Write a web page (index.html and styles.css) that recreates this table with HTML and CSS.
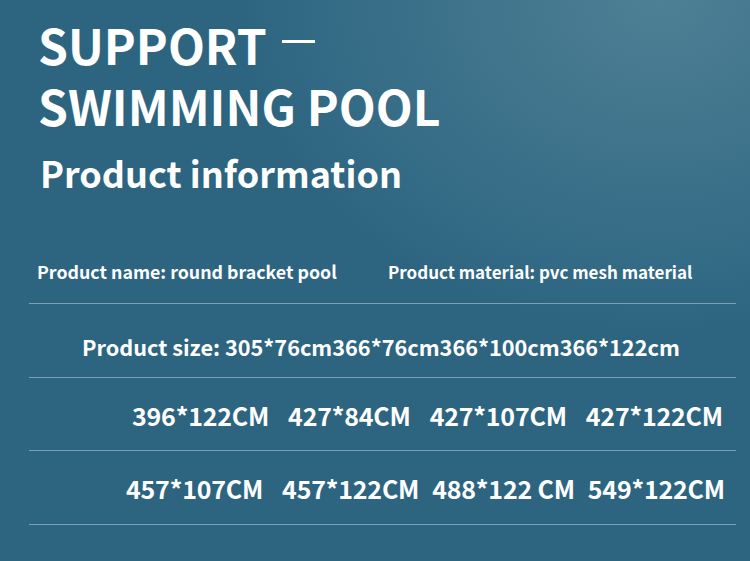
FILE: index.html
```html
<!DOCTYPE html>
<html lang="en">
<head>
  <meta charset="UTF-8" />
  <title>Support Swimming Pool</title>
  <link rel="stylesheet" href="styles.css">
</head>
<body>

<div class="page">
  <!-- Heading -->
  <h1 class="title">
    <span class="title-line">SUPPORT<span class="dash"></span></span>
    <span class="title-line">SWIMMING POOL</span>
  </h1>
  <h2 class="subtitle">Product information</h2>

  <!-- Info rows -->
  <div class="row row-info">
    <span class="info-name">Product name: round bracket pool</span>
    <span class="info-material">Product material: pvc mesh material</span>
  </div>

  <div class="row row-size">
    <span>Product size: 305*76cm366*76cm366*100cm366*122cm</span>
  </div>

  <div class="row row-sizes first">
    <span>396*122CM</span>
    <span>427*84CM</span>
    <span>427*107CM</span>
    <span>427*122CM</span>
  </div>

  <div class="row row-sizes second">
    <span>457*107CM</span>
    <span class="wide">457*122CM</span>
    <span>488*122 CM</span>
    <span>549*122CM</span>
  </div>
</div>

</body>
</html>
```

FILE: styles.css
```css
body {
  margin: 0;
  font-family: "Noto Sans CJK SC", "Noto Sans", sans-serif;
  color: #fff;
}
.page {
  width: 750px;
  height: 561px;
  overflow: hidden;
  background:
    radial-gradient(ellipse 420px 330px at 88% 0%, rgba(105, 150, 165, 0.55), rgba(105, 150, 165, 0) 100%),
    #2d6581;
}
.title {
  margin: 0;
  padding: 14px 0 0 38px;
  font-size: 48px;
  font-weight: 700;
  line-height: 61px;
}
.title-line {
  display: block;
  height: 61px;
}
.dash {
  display: inline-block;
  width: 33px;
  height: 3px;
  background: #fff;
  margin-left: 15px;
  vertical-align: 22px;
}
.subtitle {
  margin: 0;
  padding: 14px 0 0 40px;
  font-size: 36px;
  font-weight: 700;
  line-height: 44px;
}
.row {
  box-sizing: border-box;
  margin: 0 14px 0 29px;
  border-bottom: 1px solid #7aa2b6;
  display: flex;
  align-items: center;
  font-weight: 700;
  white-space: nowrap;
}
.row-info {
  margin-top: 48px;
  height: 62px;
  padding-bottom: 3px;
  font-size: 17px;
}
.info-name {
  margin-left: 8px;
  width: 351px;
  font-size: 17.8px;
}
.row-size {
  height: 74px;
  padding: 11px 0 0 53px;
  font-size: 21.7px;
}
.row-sizes {
  gap: 19px;
  font-size: 25px;
  letter-spacing: -0.2px;
}
.first {
  height: 73px;
  padding: 2px 0 0 103px;
}
.second {
  height: 74px;
  padding: 1px 0 0 97px;
  gap: 13px;
}
.second .wide {
  margin-left: 6px;
}
```
